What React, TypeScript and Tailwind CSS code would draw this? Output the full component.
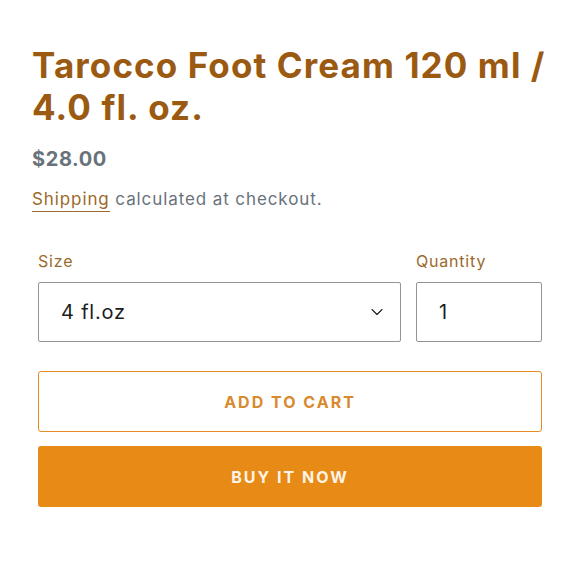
import { ChevronDown } from "lucide-react";

export default function App() {
  return (
    <div className="w-[580px] h-[580px] bg-white font-['Inter',sans-serif]">
      <div className="pt-[44px] pl-[32px] pr-[20px]">
        <h1 className="text-[35px] leading-[42px] font-bold text-[#9b5a12] tracking-[1.1px]">
          Tarocco Foot Cream 120 ml / 4.0 fl. oz.
        </h1>
        <p className="mt-[18px] text-[20px] leading-[26px] font-bold text-[#69727b] tracking-[0.6px]">$28.00</p>
        <p className="mt-[15px] text-[17px] leading-[24px] text-[#69727b] tracking-[0.9px]">
          <span className="text-[#9b6a2c] border-b border-[#9b6a2c] pb-[2px]">Shipping</span> calculated at checkout.
        </p>
      </div>

      <div className="mt-[40px] pl-[38px] pr-[38px]">
        <div className="flex gap-[15px]">
          <div className="flex flex-col w-[363px]">
            <label className="text-[16px] leading-[20px] text-[#9b6a2c] mb-[11px] tracking-[0.8px]">Size</label>
            <div className="h-[60px] border border-[#949494] rounded-[2px] flex items-center justify-between pl-[22px] pr-[13px]">
              <span className="text-[20px] text-[#1c1d1d] tracking-[0.8px]">4 fl.oz</span>
              <ChevronDown className="w-[20px] h-[20px] text-[#1c1d1d]" strokeWidth={1.3} />
            </div>
          </div>
          <div className="flex flex-col flex-1">
            <label className="text-[16px] leading-[20px] text-[#9b6a2c] mb-[11px] tracking-[0.8px]">Quantity</label>
            <div className="h-[60px] border border-[#949494] rounded-[2px] flex items-center pl-[22px]">
              <span className="text-[20px] text-[#1c1d1d]">1</span>
            </div>
          </div>
        </div>

        <button className="mt-[29px] w-full h-[61px] border border-[#e68c22] rounded-[3px] text-[#d88a2e] text-[16px] font-bold tracking-[2px] uppercase">
          Add to cart
        </button>
        <button className="mt-[14px] w-full h-[61px] bg-[#e88a16] rounded-[3px] text-[#fdf3e6] text-[16px] font-bold tracking-[2px] uppercase">
          Buy it now
        </button>
      </div>
    </div>
  );
}
